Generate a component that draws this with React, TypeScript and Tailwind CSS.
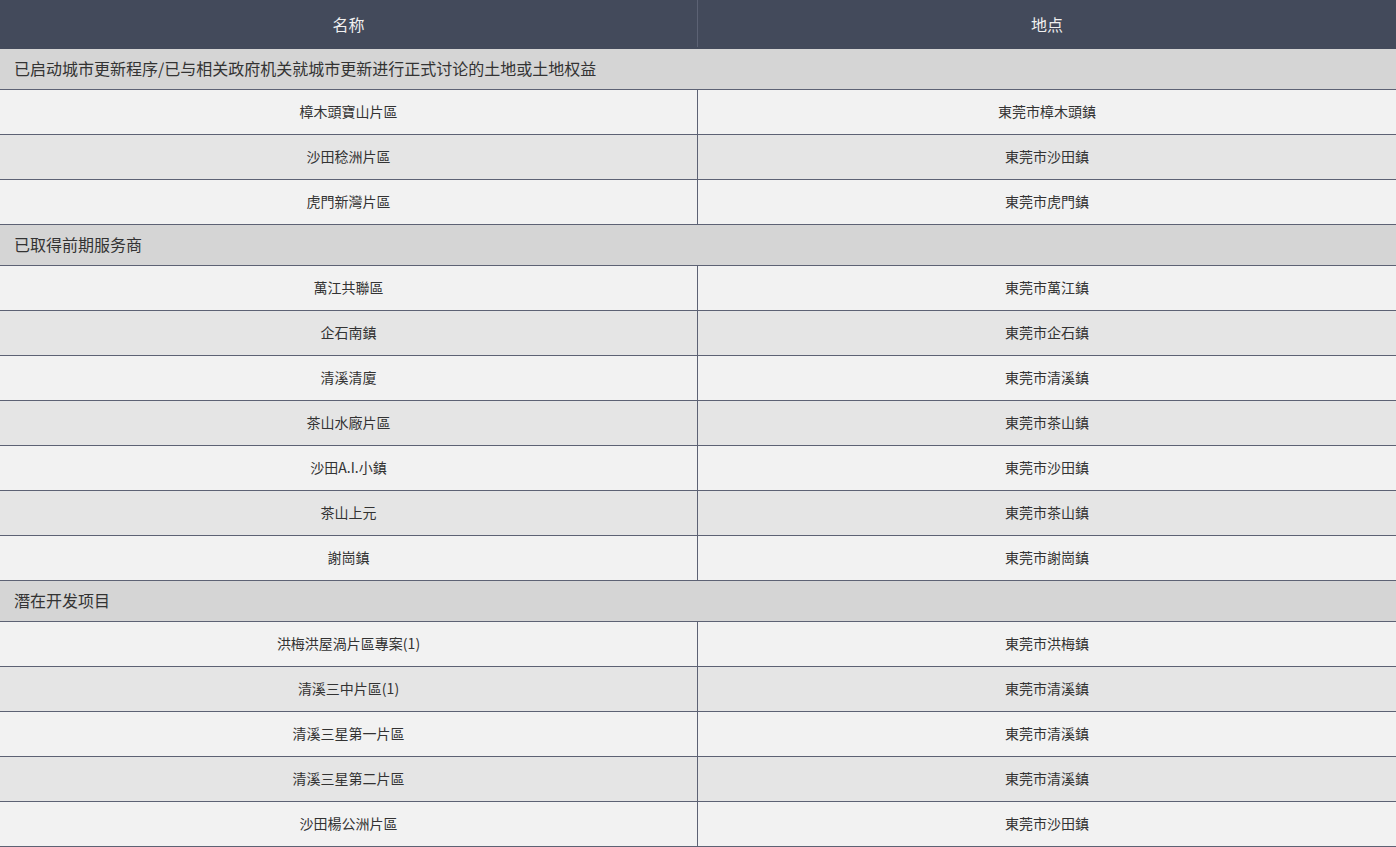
import React from "react";

type Section = { title: string; rows: [string, string][] };

const sections: Section[] = [
  {
    title: "已启动城市更新程序/已与相关政府机关就城市更新进行正式讨论的土地或土地权益",
    rows: [
      ["樟木頭寶山片區", "東莞市樟木頭鎮"],
      ["沙田稔洲片區", "東莞市沙田鎮"],
      ["虎門新灣片區", "東莞市虎門鎮"],
    ],
  },
  {
    title: "已取得前期服务商",
    rows: [
      ["萬江共聯區", "東莞市萬江鎮"],
      ["企石南鎮", "東莞市企石鎮"],
      ["清溪清廈", "東莞市清溪鎮"],
      ["茶山水廠片區", "東莞市茶山鎮"],
      ["沙田A.I.小鎮", "東莞市沙田鎮"],
      ["茶山上元", "東莞市茶山鎮"],
      ["謝崗鎮", "東莞市謝崗鎮"],
    ],
  },
  {
    title: "潛在开发项目",
    rows: [
      ["洪梅洪屋渦片區專案(1)", "東莞市洪梅鎮"],
      ["清溪三中片區(1)", "東莞市清溪鎮"],
      ["清溪三星第一片區", "東莞市清溪鎮"],
      ["清溪三星第二片區", "東莞市清溪鎮"],
      ["沙田楊公洲片區", "東莞市沙田鎮"],
    ],
  },
];

export default function App() {
  return (
    <div
      className="w-[1396px] bg-white"
      style={{ fontFamily: '"Noto Sans CJK SC", "Noto Sans", sans-serif' }}
    >
      <div className="flex h-[49px] bg-[#434a5b] pb-[2px] text-[16px] text-[#f0f0f0]">
        <div className="flex w-[698px] items-center justify-center border-r border-[#5c6274]">
          名称
        </div>
        <div className="flex flex-1 items-center justify-center">地点</div>
      </div>
      {sections.map((s, si) => (
        <div key={si}>
          <div className="flex h-[41px] items-center border-b border-[#5d6274] bg-[#d5d5d5] pb-[3px] pl-[14px] text-[16px] text-[#333333]">
            {s.title}
          </div>
          {s.rows.map(([name, place], ri) => (
            <div
              key={ri}
              className={`flex h-[45px] border-b border-[#5d6274] text-[14px] text-[#333333] ${
                ri % 2 === 0 ? "bg-[#f2f2f2]" : "bg-[#e5e5e5]"
              }`}
            >
              <div className="flex w-[698px] items-center justify-center border-r border-[#5d6274] pb-[2px]">
                {name}
              </div>
              <div className="flex flex-1 items-center justify-center pb-[2px]">{place}</div>
            </div>
          ))}
        </div>
      ))}
    </div>
  );
}
